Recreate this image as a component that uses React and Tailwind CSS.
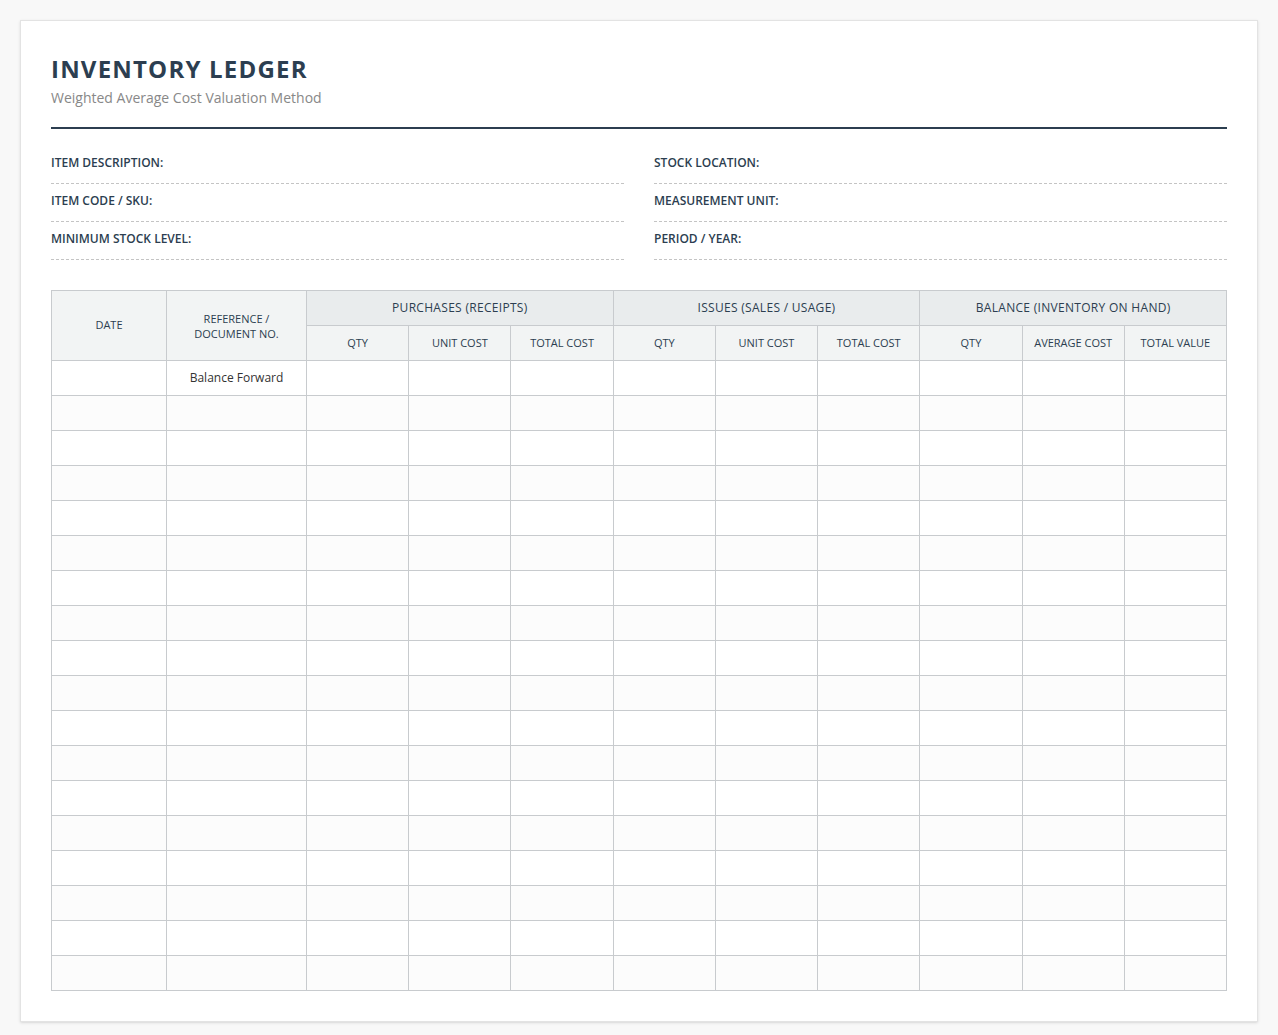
export default function App() {
  const font = { fontFamily: '"Open Sans", "Noto Sans", sans-serif' };
  const fields = [
    ["ITEM DESCRIPTION:", "STOCK LOCATION:"],
    ["ITEM CODE / SKU:", "MEASUREMENT UNIT:"],
    ["MINIMUM STOCK LEVEL:", "PERIOD / YEAR:"],
  ];
  const rows = Array.from({ length: 18 });
  const th = "border border-[#c8cbce] text-[11px] font-normal text-[#2c3e50] bg-[#f2f4f4]";
  const grp = "border border-[#c8cbce] text-[12px] font-normal tracking-[0.3px] text-[#2c3e50] bg-[#e9eced] h-[35px]";
  return (
    <div className="min-h-[1035px] bg-[#f8f8f8] p-5" style={font}>
      <div className="bg-white border border-[#e3e3e3] shadow-sm px-[30px] pt-[30px] pb-[30px]">
        <h1 className="text-[24px] leading-[36px] font-bold tracking-[1.2px] text-[#2c3e50]">INVENTORY LEDGER</h1>
        <p className="text-[14px] leading-[20px] text-[#888] mt-[1px]">Weighted Average Cost Valuation Method</p>
        <div className="h-[2px] bg-[#2c3e50] mt-[19px]"></div>
        <div className="grid grid-cols-2 gap-x-[30px] mt-[26px]">
          {fields.flat().map((f, i) => (
            <div key={i} className="border-b border-dashed border-[#c4c4c4] text-[12px] font-semibold text-[#2c3e50] h-[29px] leading-[16px] mb-[9px]">{f}</div>
          ))}
        </div>
        <table className="w-full border-collapse mt-[21px] table-fixed">
          <colgroup>
            <col style={{ width: 115 }} />
            <col style={{ width: 140 }} />
            {Array.from({ length: 9 }).map((_, i) => <col key={i} />)}
          </colgroup>
          <thead>
            <tr>
              <th rowSpan={2} className={th}>DATE</th>
              <th rowSpan={2} className={th + " leading-[15px]"}>REFERENCE /<br />DOCUMENT NO.</th>
              <th colSpan={3} className={grp}>PURCHASES (RECEIPTS)</th>
              <th colSpan={3} className={grp}>ISSUES (SALES / USAGE)</th>
              <th colSpan={3} className={grp}>BALANCE (INVENTORY ON HAND)</th>
            </tr>
            <tr>
              {["QTY","UNIT COST","TOTAL COST","QTY","UNIT COST","TOTAL COST","QTY","AVERAGE COST","TOTAL VALUE"].map((h, i) => (
                <th key={i} className={th + " h-[35px]"}>{h}</th>
              ))}
            </tr>
          </thead>
          <tbody>
            {rows.map((_, r) => (
              <tr key={r} className={r % 2 === 1 ? "bg-[#fcfcfc]" : "bg-white"}>
                {Array.from({ length: 11 }).map((_, c) => (
                  <td key={c} className="border border-[#c8cbce] h-[35px] text-center text-[12px] text-[#333]">
                    {r === 0 && c === 1 ? "Balance Forward" : ""}
                  </td>
                ))}
              </tr>
            ))}
          </tbody>
        </table>
      </div>
    </div>
  );
}
